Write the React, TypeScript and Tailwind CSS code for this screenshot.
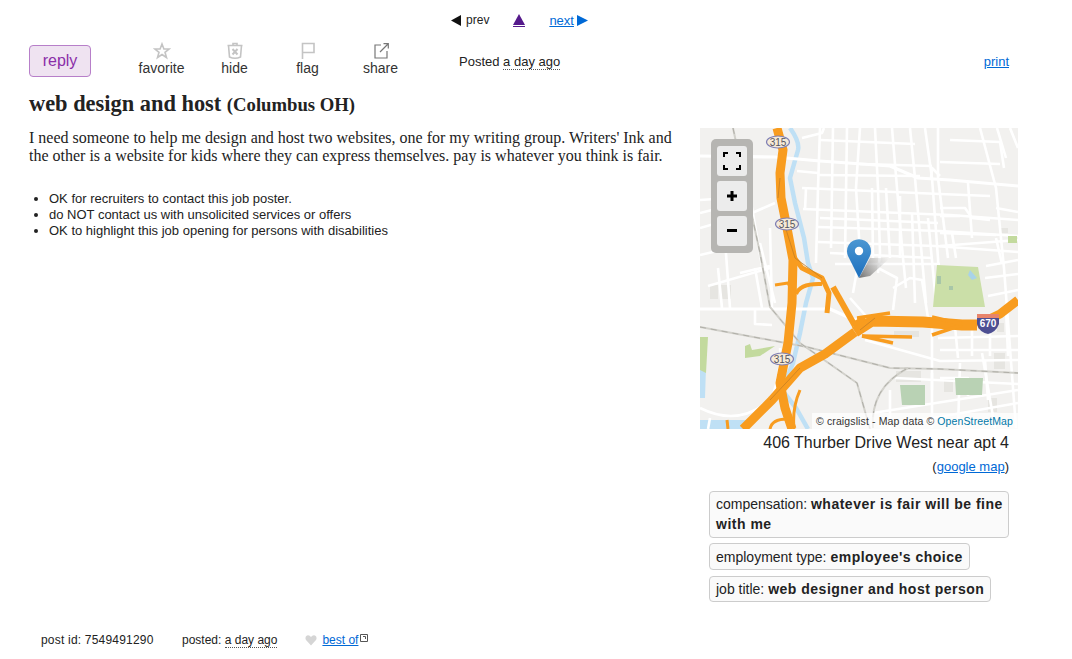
const streets = [
  "M0 28 L75 29 L120 33 L190 38 L218 50 L250 52 L318 58",
  "M97 43 L118 45", "M102 60 L240 66 L290 68", "M103 81 L250 87 L318 92", "M120 90 L238 95", "M118 99 L240 103 L318 108",
  "M118 114 L235 118 L318 124", "M130 125 L232 130", "M135 136 L240 136", "M240 118 L318 112", "M118 47 L220 48",
  "M240 80 L265 80 L272 90 L290 92", "M240 88 L260 88", "M240 105 L296 107", "M286 138 L318 132", "M285 150 L318 146", "M288 168 L318 162",
  "M240 48 L232 40 L231 50", "M240 34 L300 36", "M250 12 L300 14 L304 40", "M120 12 L215 16", "M160 36 L232 38", "M296 80 L318 84",
  "M0 100 L52 85 L75 75", "M8 158 L70 140", "M0 127 L30 120", "M20 60 L50 55", "M0 72 L30 70", "M40 145 L70 138",
  "M0 181 L130 181 L150 190 L170 197 L230 197", "M55 181 L55 196 L72 197", "M165 212 L240 233 L318 232",
  "M240 222 L318 222", "M238 210 L318 208", "M195 250 L318 256", "M232 245 L232 262", "M260 235 L258 300", "M173 285 L318 262",
  "M240 250 L268 250 L268 268", "M285 232 L288 272",
  "M102 10 L122 5 L124 0", "M106 60 L105 82", "M120 0 L118 60 L116 135", "M133 0 L131 120", "M147 0 L145 130", "M160 0 L156 60 L160 125 L153 165",
  "M175 0 L178 60 L180 125 L178 145", "M192 0 L197 60 L203 130 L206 160", "M210 0 L215 50 L222 130 L226 175", "M225 0 L232 50 L238 130 L240 175", "M238 0 L238 50 L248 130",
  "M280 0 L296 60 L304 140 L316 300", "M297 0 L306 30", "M310 0 L318 20", "M268 55 L272 110", "M186 60 L190 130", "M172 60 L173 130", "M200 68 L200 130", "M212 85 L215 175", "M228 90 L236 175",
  "M252 105 L256 130", "M150 170 L165 187 L170 195", "M178 140 L197 150 L193 182", "M193 160 L210 150 L222 152 L228 190", "M296 110 L302 136",
  "M255 198 L258 230", "M290 197 L290 228", "M272 198 L272 228", "M232 198 L232 300", "M306 180 L308 228", "M282 225 L295 300",
  "M40 30 L52 80 L62 138", "M30 60 L40 120", "M25 112 L30 180", "M55 140 L62 180", "M18 140 L22 180", "M70 100 L72 180",
  "M60 115 L75 175", "M0 280 Q40 300 72 270 Q82 240 80 220", "M10 290 L8 301", "M0 85 L20 80", "M190 262 L190 301", "M205 295 L318 275",
];
const rails = ["M0 199 L107 219 L190 240 L240 241 L318 245", "M33 0 L60 125 L70 179 L100 215 L157 255 L170 301", "M173 300 Q170 260 208 240"];
const orange = [
  { d: "M77 0 L83 22 L80 45 L81 70 L87 100 L93 132 L92 175 L88 215 L80 255 L85 280 L92 301", w: 9 },
  { d: "M93 128 L102 140 L122 150 L129 165 L127 185", w: 5 },
  { d: "M96 166 Q100 155 122 156", w: 4 }, { d: "M75 157 L88 155 L95 168", w: 3 },
  { d: "M43 301 L72 272 L100 240 L125 226 L155 204", w: 9 },
  { d: "M155 204 L172 193 L223 194 L262 197 L277 197", w: 11 },
  { d: "M277 197 L300 186 L318 172", w: 9 },
  { d: "M133 159 L155 198", w: 6 }, { d: "M162 208 L212 209", w: 3.5 }, { d: "M162 208 L193 215", w: 3.5 },
  { d: "M232 207 L262 197", w: 3.5 }, { d: "M232 189 L262 196", w: 3.5 }, { d: "M157 190 L190 185", w: 3.5 }, { d: "M154 196 L165 190", w: 5 },
  { d: "M100 262 Q92 280 94 301", w: 3 }, { d: "M70 301 Q72 290 90 291", w: 3 }, { d: "M27 292 L28 301", w: 3 },
];

function Icon({ children }: { children: React.ReactNode }) {
  return (
    <svg viewBox="0 0 18 18" className="h-[18px] w-[18px]" fill="none" stroke="#c4c4c4" strokeWidth="1.6">
      {children}
    </svg>
  );
}

function Action({ label, children }: { label: string; children: React.ReactNode }) {
  return (
    <div className="-mt-[3px] flex w-[73px] flex-col items-center">
      {children}
      <span className="text-[14px] leading-[16px] text-[#333]">{label}</span>
    </div>
  );
}

function MapArt() {
  return (
    <svg viewBox="0 0 318 301" className="block h-full w-full">
      <defs>
        <linearGradient id="pin" x1="0" y1="0" x2="0" y2="1">
          <stop offset="0" stopColor="#4b97d2" />
          <stop offset="1" stopColor="#1c6fbe" />
        </linearGradient>
        <linearGradient id="shade" gradientUnits="userSpaceOnUse" x1="159" y1="150" x2="188" y2="130">
          <stop offset="0" stopColor="#444" stopOpacity="0.75" />
          <stop offset="1" stopColor="#888" stopOpacity="0" />
        </linearGradient>
      </defs>
      <rect width="318" height="301" fill="#f2f1ef" />
      <g fill="#e6e5e1">
        <rect x="10" y="157" width="8" height="14" /><rect x="20" y="157" width="11" height="14" />
        <rect x="194" y="203" width="25" height="6" /><rect x="300" y="100" width="8" height="5" />
        <rect x="294" y="225" width="11" height="16" /><rect x="196" y="243" width="25" height="11" />
        <rect x="244" y="250" width="9" height="14" /><rect x="297" y="195" width="7" height="9" /><rect x="288" y="270" width="9" height="14" />
      </g>
      <path d="M0 292 H55 L42 301 H0Z M0 240 H6 L5 270 H0Z" fill="#bfe0f5" />
      <path d="M90 0 Q100 14 98 22 L90 50 L95 75 L104 110 L108 135 L113 150 L106 175 L100 205 L93 235 L82 262 L96 280 L108 301" fill="none" stroke="#bfe0f5" strokeWidth="4.5" />
      <g fill="none" stroke="#fff" strokeLinejoin="round">
        {streets.map((d, i) => (
          <path key={i} d={d} strokeWidth={i < 1 || d.startsWith("M0 181") ? 3.2 : 2.6} />
        ))}
      </g>
      <path d="M237 137 L278 139 L285 179 L233 179Z" fill="#cbdfa8" />
      <path d="M270 142 L277 150 L272 152 L268 147Z" fill="#a9d3e8" />
      <rect x="237" y="148" width="4" height="8" fill="#a8c6a8" /><rect x="249" y="158" width="4" height="4" fill="#a8c6a8" />
      <path d="M308 108 H317 V115 H308Z M0 209 H8 L6 245 L0 242Z M45 218 L50 216 L52 222 L75 218 L60 228 L45 230Z" fill="#c3da9e" />
      <path d="M200 257 H225 V277 H202Z M255 250 H283 L282 267 H256Z" fill="#b9d2b4" />
      <g fill="none">
        {rails.map((d, i) => (
          <g key={i}>
            <path d={d} stroke="#d2d1cb" strokeWidth="2" />
            <path d={d} stroke="#b0afa8" strokeWidth="1" strokeDasharray="6 5" />
          </g>
        ))}
      </g>
      <g fill="none" strokeLinejoin="round" strokeLinecap="butt">
        {orange.map((o, i) => (
          <path key={i} d={o.d} stroke="#f89c1f" strokeWidth={o.w} />
        ))}
        <path d="M80 50 L78 70 M84 95 L95 130 L122 150 M100 240 L70 272 M160 202 L175 190" stroke="#c47f25" strokeWidth="0.8" />
      </g>
      {[[78, 14], [87, 96], [82, 231]].map(([x, y]) => (
        <g key={x}>
          <ellipse cx={x} cy={y} rx="11.5" ry="6" fill="#f5ead8" stroke="#8181b5" strokeWidth="1.2" />
          <text x={x} y={y + 3.5} textAnchor="middle" fontSize="10" fill="#55555f" fontFamily="Liberation Sans, sans-serif">315</text>
        </g>
      ))}
      <path d="M277 186 H299 V196 Q296 204 288 206 Q279 204 277 196Z" fill="#4d4f92" />
      <path d="M277 186 H299 V190 H277Z" fill="#e8846a" />
      <text x="288" y="199" textAnchor="middle" fontSize="10" fontWeight="700" fill="#fff" fontFamily="Liberation Sans, sans-serif">670</text>
      <path d="M159 150 L170 130 L190 130 L170 148Z" fill="url(#shade)" />
      <path d="M159 150 L148.5 129 A12 12 0 1 1 169.5 129Z" fill="url(#pin)" />
      <circle cx="159" cy="123" r="4.2" fill="#fff" />
    </svg>
  );
}

const linkCls = "text-[#0069d6] underline";
const dotted = "border-b border-dotted border-[#555]";

export default function App() {
  return (
    <div className="h-[659px] overflow-hidden bg-white text-[#222] font-['Liberation_Sans',Arial,sans-serif]">
      <nav className="flex h-[45px] items-start justify-center gap-[24px] pt-[13px] pr-[33px] text-[12px] leading-[15px]">
        <span className="flex items-center">
          <svg viewBox="0 0 10 11" className="mr-[5px] h-[11px] w-[10px]" fill="#111"><path d="M0 5.5 L10 0 V11Z" /></svg>
          prev
        </span>
        <span className="flex h-[14px] items-center border-b border-[#551a8b]">
          <svg viewBox="0 0 12 11" className="h-[11px] w-[12px]" fill="#551a8b"><path d="M6 0 L12 11 H0Z" /></svg>
        </span>
        <a className={linkCls + " flex items-center text-[13px]"}>
          next
          <svg viewBox="0 0 11 11" className="ml-[3px] h-[11px] w-[11px]" fill="#0069d6"><path d="M11 5.5 L0 0 V11Z" /></svg>
        </a>
      </nav>

      <div className="flex h-[38px] items-start pl-[29px] pr-[63px]">
        <button className="h-[32px] w-[62px] rounded-[4px] border border-[#b77fc9] bg-[#efe3f1] text-[16px] text-[#8a2ea8]">reply</button>
        <div className="ml-[34px] flex">
          <Action label="favorite">
            <Icon><path d="M9 2 L10.9 7 L16 7 L12 10.3 L13.5 15.5 L9 12.5 L4.5 15.5 L6 10.3 L2 7 L7.1 7Z" /></Icon>
          </Action>
          <Action label="hide">
            <Icon>
              <path d="M1.5 3.5 H16.5 M7 3.5 V1.5 H11 V3.5 M2.5 3.5 L3.5 15 Q9 17.5 14.5 15 L15.5 3.5" />
              <path d="M6.5 7 L11.5 12.5 M11.5 7 L6.5 12.5" strokeWidth="2" />
            </Icon>
          </Action>
          <Action label="flag">
            <Icon><path d="M3.5 17 V1.5 H15 V10.5 H3.5" /></Icon>
          </Action>
          <Action label="share">
            <svg viewBox="0 0 18 18" className="h-[18px] w-[18px]" fill="none" stroke="#777" strokeWidth="1.2">
              <path d="M9 3 H3 V16 H15 V9 M8 10 L16 2 M11.5 1.7 H16.3 V6.5" />
            </svg>
          </Action>
        </div>
        <div className="ml-[42px] pt-[9px] text-[13px] leading-[16px]">
          Posted <span className={dotted}>a day ago</span>
        </div>
        <a className={linkCls + " ml-auto pt-[9px] text-[13px] leading-[16px]"}>print</a>
      </div>

      <h1 className="h-[45px] pl-[29px] pt-[8px] font-['Liberation_Serif',serif] text-[22.4px] font-bold leading-[26px]">
        web design and host <span className="text-[18.7px]">(Columbus OH)</span>
      </h1>

      <div className="flex pl-[29px]">
        <div className="w-[671px]">
          <p className="mt-[1px] w-[648px] font-['Liberation_Serif',serif] text-[16px] leading-[18px]">
            I need someone to help me design and host two websites, one for my writing group. Writers' Ink and the other is a website for kids where they can express themselves. pay is whatever you think is fair.
          </p>
          <ul className="mt-[26px] list-disc pl-[20px] text-[13px] leading-[16px]">
            <li>OK for recruiters to contact this job poster.</li>
            <li>do NOT contact us with unsolicited services or offers</li>
            <li>OK to highlight this job opening for persons with disabilities</li>
          </ul>
        </div>
        <aside className="w-[318px]">
          <div className="relative h-[301px] w-[318px] overflow-hidden">
            <MapArt />
            <div className="absolute left-[11px] top-[11px] flex h-[114px] w-[42px] flex-col gap-[5px] rounded-[5px] bg-[#b6b5b2] p-[6px] pt-[7px]">
              <div className="flex h-[30px] w-[30px] items-center justify-center rounded-[3px] bg-[#ececec]">
                <svg viewBox="0 0 18 18" className="h-[18px] w-[18px]" fill="none" stroke="#000" strokeWidth="2"><path d="M1 5 V1 H5 M13 1 H17 V5 M17 13 V17 H13 M5 17 H1 V13" /></svg>
              </div>
              <div className="flex h-[30px] w-[30px] items-center justify-center rounded-[3px] bg-[#ececec]">
                <svg viewBox="0 0 10 10" className="h-[10px] w-[10px]" fill="none" stroke="#000" strokeWidth="3"><path d="M0 5 H10 M5 0 V10" /></svg>
              </div>
              <div className="flex h-[30px] w-[30px] items-center justify-center rounded-[3px] bg-[#ececec]">
                <svg viewBox="0 0 10 4" className="h-[4px] w-[10px]" fill="#000"><rect width="10" height="3" /></svg>
              </div>
            </div>
            <div className="absolute bottom-0 right-0 bg-white/75 pl-[4px] pr-[5px] text-[10.5px] leading-[16px] tracking-[0.12px] text-[#333]">
              © craigslist - Map data © <span className="text-[#0078a8]">OpenStreetMap</span>
            </div>
          </div>
          <div className="pr-[9px] text-right">
            <div className="mt-[4px] text-[16px] leading-[20px]">406 Thurber Drive West near apt 4</div>
            <div className="mt-[7px] text-[13px] leading-[14px]">(<a className={linkCls}>google map</a>)</div>
          </div>
          <div className="ml-[9px] mt-[17px] flex w-[300px] flex-col items-start gap-[5px] text-[14px] leading-[20px]">
            <div className="rounded-[4px] border border-[#ccc] bg-[#fafafa] pb-[3px] pl-[6px] pr-[2px] pt-[2px]">compensation: <b className="tracking-[0.5px]">whatever is fair will be fine with me</b></div>
            <div className="rounded-[4px] border border-[#ccc] bg-[#fafafa] px-[6px] py-[2.5px]">employment type: <b className="tracking-[0.5px]">employee's choice</b></div>
            <div className="mt-[1px] rounded-[4px] border border-[#ccc] bg-[#fafafa] px-[6px] py-[2px]">job title: <b className="tracking-[0.5px]">web designer and host person</b></div>
          </div>
        </aside>
      </div>

      <footer className="absolute left-[41px] top-[632px] flex items-center text-[12px] leading-[16px]">
        <span className="w-[141px] tracking-[0.2px]">post id: 7549491290</span>
        <span>posted: <span className={dotted}>a day ago</span></span>
        <svg viewBox="0 0 12 12" className="ml-[28px] h-[12px] w-[12px]" fill="#d5d5d5"><path d="M6 11.5 L1 6 Q-0.5 3 2 1.5 Q4.5 0.8 6 3 Q7.5 0.8 10 1.5 Q12.5 3 11 6Z" /></svg>
        <a className={linkCls + " ml-[5px]"}>best of</a>
        <svg viewBox="0 0 8 8" className="ml-[2px] mb-[4px] h-[8px] w-[8px]" fill="none" stroke="#555" strokeWidth="1"><path d="M0.5 0.5 H7.5 V7.5 H0.5Z M3 2.5 H5.5 V5" /></svg>
      </footer>
    </div>
  );
}
